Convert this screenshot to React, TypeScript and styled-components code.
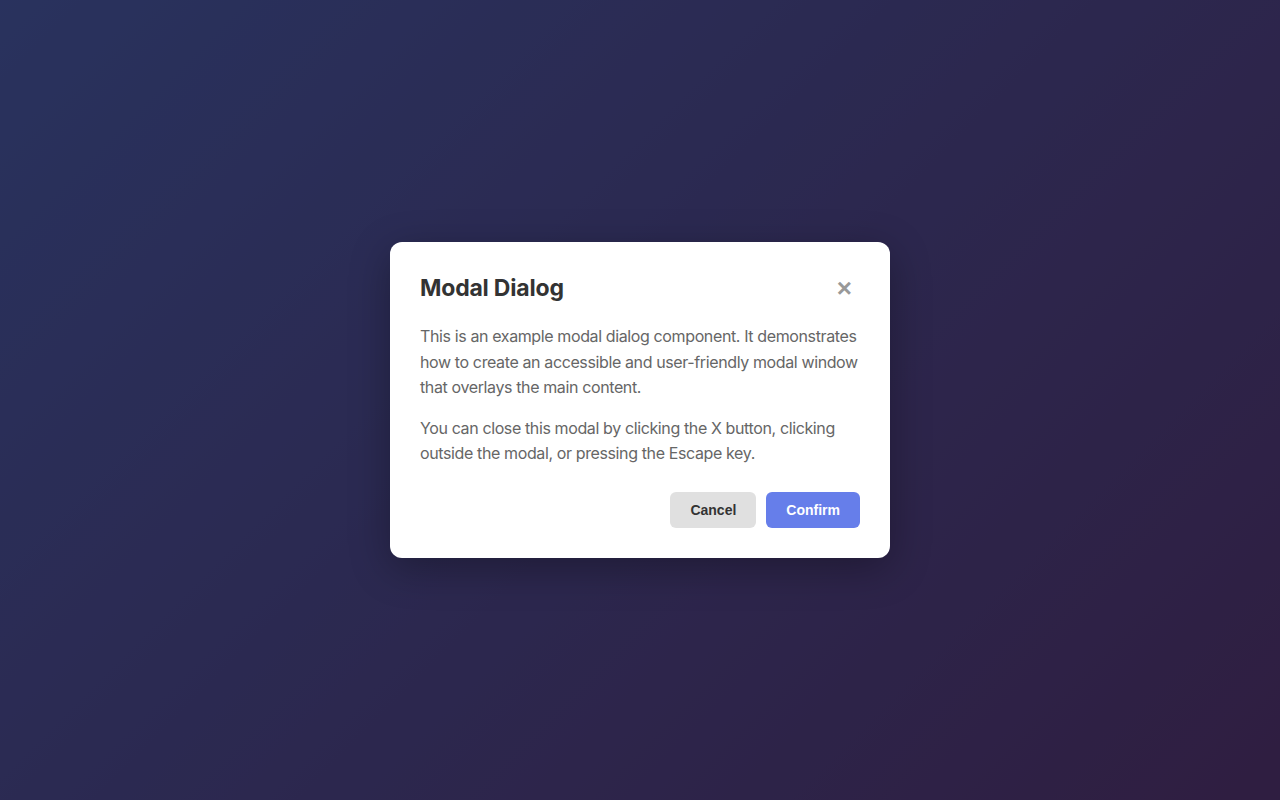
import styled, { createGlobalStyle } from 'styled-components';

const GlobalStyle = createGlobalStyle`
  html, body, #root { margin: 0; padding: 0; height: 100%; }
  body { font-family: Inter, "Noto Sans", sans-serif; }
`;

const Page = styled.div`
  height: 100vh;
  background: linear-gradient(135deg, #667eea 0%, #764ba2 100%);
  position: relative;
`;

const Overlay = styled.div`
  position: absolute;
  inset: 0;
  background: rgba(0, 0, 0, 0.6);
  display: flex;
  align-items: center;
  justify-content: center;
`;

const Modal = styled.div`
  background: white;
  width: 500px;
  box-sizing: border-box;
  padding: 30px;
  border-radius: 12px;
  box-shadow: 0 10px 40px rgba(0, 0, 0, 0.3);
`;

const Header = styled.div`
  display: flex;
  justify-content: space-between;
  align-items: center;
  margin-bottom: 20px;

  h2 {
    margin: 0;
    font-size: 23px;
    font-weight: 700;
    letter-spacing: -0.2px;
    color: #333;
  }
`;

const CloseButton = styled.button`
  background: none;
  border: none;
  height: 32px;
  font-size: 26px;
  line-height: 1;
  color: #999;
  cursor: pointer;
  padding: 0 8px;
  font-family: "Liberation Sans", Arial, sans-serif;
  font-weight: 700;
`;

const Body = styled.div`
  p {
    margin: 0 0 15px;
    font-size: 16px;
    line-height: 1.6;
    letter-spacing: -0.38px;
    color: #666;
  }
`;

const Footer = styled.div`
  display: flex;
  justify-content: flex-end;
  gap: 10px;
  margin-top: 25px;
`;

const Button = styled.button<{ $primary?: boolean }>`
  padding: 10px 20px;
  border: none;
  border-radius: 6px;
  font-family: "Liberation Sans", Arial, sans-serif;
  font-size: 14px;
  font-weight: 700;
  cursor: pointer;
  background: ${p => (p.$primary ? '#667eea' : '#e0e0e0')};
  color: ${p => (p.$primary ? 'white' : '#333')};
`;

export default function App() {
  return (
    <Page>
      <GlobalStyle />
      <Overlay>
        <Modal role="dialog" aria-modal="true">
          <Header>
            <h2>Modal Dialog</h2>
            <CloseButton aria-label="Close">×</CloseButton>
          </Header>
          <Body>
            <p>
              This is an example modal dialog component. It demonstrates how to create an
              accessible and user-friendly modal window that overlays the main content.
            </p>
            <p>
              You can close this modal by clicking the X button, clicking outside the modal,
              or pressing the Escape key.
            </p>
          </Body>
          <Footer>
            <Button>Cancel</Button>
            <Button $primary>Confirm</Button>
          </Footer>
        </Modal>
      </Overlay>
    </Page>
  );
}
